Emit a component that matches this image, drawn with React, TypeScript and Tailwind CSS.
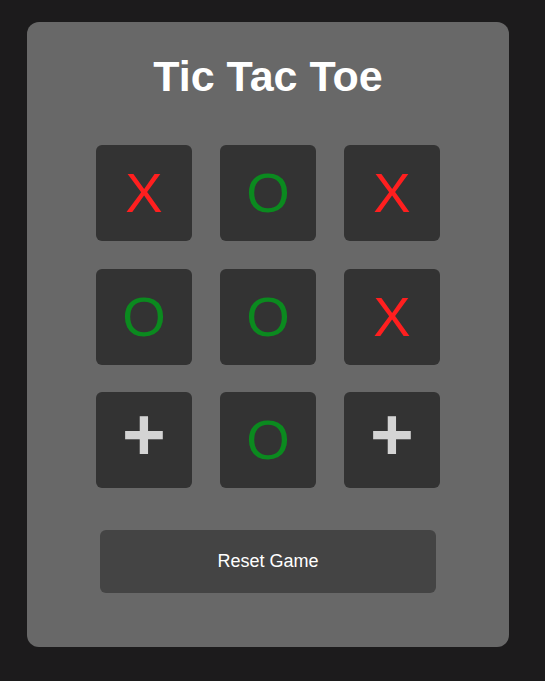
import React, { useState } from "react"

type Cell = "X" | "O" | null

const start: Cell[] = ["X", "O", "X", "O", "O", "X", null, "O", null]

export default function App() {
  const [board, setBoard] = useState<Cell[]>(start)

  return (
    <div className="min-h-screen bg-[#1c1b1c] pl-[27px] pt-[22px] pb-[34px]" style={{ fontFamily: '"Liberation Sans", Arial, sans-serif' }}>
      <div className="w-[482px] h-[625px] bg-[#686868] rounded-[12px] pt-[29px] flex flex-col items-center">
        <h1 className="text-[43px] leading-[50px] font-bold text-white">Tic Tac Toe</h1>
        <div className="grid grid-cols-[96px_96px_96px] gap-x-[28px] gap-y-[27.5px] mt-[44px]">
          {board.map((cell, index) => (
            <button
              key={index}
              className="w-[96px] h-[96px] bg-[#333333] rounded-[6px] flex items-center justify-center"
              onClick={() => {
                if (cell) return
                const next = [...board]
                next[index] = "X"
                setBoard(next)
              }}
            >
              {cell === "X" && <span className="text-[56px] leading-none text-[#ff1f1f]">X</span>}
              {cell === "O" && <span className="text-[56px] leading-none text-[#0b8a1f]">O</span>}
              {cell === null && <span className="text-[75px] leading-none font-bold text-[#d4d4d4] -mt-[12px]">+</span>}
            </button>
          ))}
        </div>
        <button
          className="mt-[42px] w-[336px] h-[63px] bg-[#444444] rounded-[6px] text-white text-[18px]"
          onClick={() => setBoard(Array(9).fill(null))}
        >
          Reset Game
        </button>
      </div>
    </div>
  )
}
